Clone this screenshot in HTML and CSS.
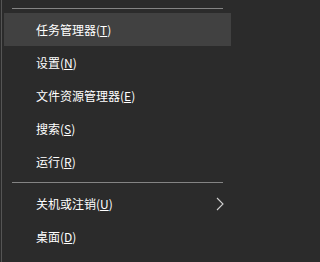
FILE: index.html
```html
<!DOCTYPE html>
<html lang="zh-CN">
<head>
<meta charset="utf-8">
<link rel="stylesheet" href="styles.css">
</head>
<body>
<div class="menu">
  <div class="sep"></div>
  <div class="item hover">任务管理器(<u>T</u>)</div>
  <div class="item">设置(<u>N</u>)</div>
  <div class="item">文件资源管理器(<u>E</u>)</div>
  <div class="item">搜索(<u>S</u>)</div>
  <div class="item">运行(<u>R</u>)</div>
  <div class="sep"></div>
  <div class="item sub">关机或注销(<u>U</u>)
    <svg class="chev" width="8" height="14" viewBox="0 0 8 14"><path d="M1 1 L7 7 L1 13" fill="none" stroke="#d0d0d0" stroke-width="1.1"/></svg>
  </div>
  <div class="item">桌面(<u>D</u>)</div>
</div>
</body>
</html>
```
FILE: styles.css
```css
html, body {
  margin: 0;
  padding: 0;
  background: #2b2b2b;
}
.menu {
  width: 230px;
  height: 262px;
  box-sizing: border-box;
  background: #2b2b2b;
  border-left: 1px solid #555555;
  margin-left: 1px;
  padding: 4px 0 0 2px;
  font-family: "Microsoft YaHei", "Noto Sans CJK SC", sans-serif;
  font-size: 12px;
  color: #ffffff;
}
.sep {
  height: 1px;
  background: #848484;
  margin: 4px 8px 4px 8px;
}
.item {
  height: 33px;
  display: flex;
  align-items: center;
  padding-left: 32px;
  position: relative;
  line-height: 1;
}
.item.hover {
  background: #414141;
}
.item u {
  text-decoration-thickness: 1px;
  text-underline-offset: 1px;
}
.chev {
  position: absolute;
  right: 7px;
  top: 10px;
}
```
